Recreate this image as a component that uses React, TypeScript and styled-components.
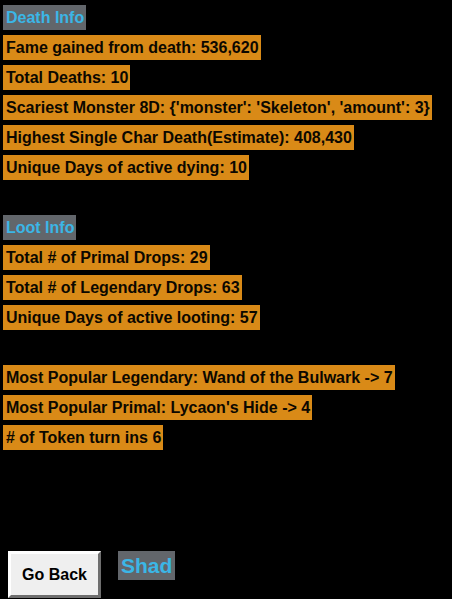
import React from "react";
import styled, { createGlobalStyle } from "styled-components";

const GlobalStyle = createGlobalStyle`
  html, body {
    margin: 0;
    padding: 0;
    background: #000000;
  }
  body {
    font-family: "Liberation Sans", Arial, sans-serif;
  }
`;

const Page = styled.div`
  width: 452px;
  min-height: 599px;
  box-sizing: border-box;
  background: #000000;
  padding: 5px 0 0 3px;
  display: flex;
  flex-direction: column;
  align-items: flex-start;
  gap: 5px;
`;

const Label = styled.div<{ header?: boolean }>`
  height: 25px;
  box-sizing: border-box;
  padding: 0 2px 0 3px;
  display: flex;
  align-items: center;
  font-size: 16px;
  font-weight: bold;
  white-space: nowrap;
  background: ${(p) => (p.header ? "#62666b" : "#d98a17")};
  color: ${(p) => (p.header ? "#3bb6e6" : "#0c0800")};
`;

const Spacer = styled.div`
  height: 25px;
`;

const Footer = styled.div`
  margin-top: 96px;
  padding-left: 5px;
  display: flex;
  align-items: flex-start;
  gap: 17px;
`;

const BackButton = styled.button`
  width: 93px;
  height: 47px;
  box-sizing: border-box;
  background: #efefef;
  border: 3px solid;
  border-color: #ffffff #6e6e6e #6e6e6e #ffffff;
  font-family: "Liberation Sans", Arial, sans-serif;
  font-size: 16px;
  font-weight: bold;
  color: #000000;
  padding: 0;
  cursor: pointer;
`;

const UserTag = styled.div`
  height: 29px;
  box-sizing: border-box;
  padding: 0 3px;
  display: flex;
  align-items: center;
  background: #62666b;
  color: #3bb6e6;
  font-size: 21px;
  font-weight: bold;
`;

const deathStats = [
  "Fame gained from death: 536,620",
  "Total Deaths: 10",
  "Scariest Monster 8D: {'monster': 'Skeleton', 'amount': 3}",
  "Highest Single Char Death(Estimate): 408,430",
  "Unique Days of active dying: 10",
];

const lootStats = [
  "Total # of Primal Drops: 29",
  "Total # of Legendary Drops: 63",
  "Unique Days of active looting: 57",
];

const popularStats = [
  "Most Popular Legendary: Wand of the Bulwark -> 7",
  "Most Popular Primal: Lycaon's Hide -> 4",
  "# of Token turn ins 6",
];

export default function App() {
  return (
    <>
      <GlobalStyle />
      <Page>
        <Label header>Death Info</Label>
        {deathStats.map((s) => (
          <Label key={s}>{s}</Label>
        ))}
        <Spacer />
        <Label header>Loot Info</Label>
        {lootStats.map((s) => (
          <Label key={s}>{s}</Label>
        ))}
        <Spacer />
        {popularStats.map((s) => (
          <Label key={s}>{s}</Label>
        ))}
        <Footer>
          <BackButton>Go Back</BackButton>
          <UserTag>Shad</UserTag>
        </Footer>
      </Page>
    </>
  );
}
